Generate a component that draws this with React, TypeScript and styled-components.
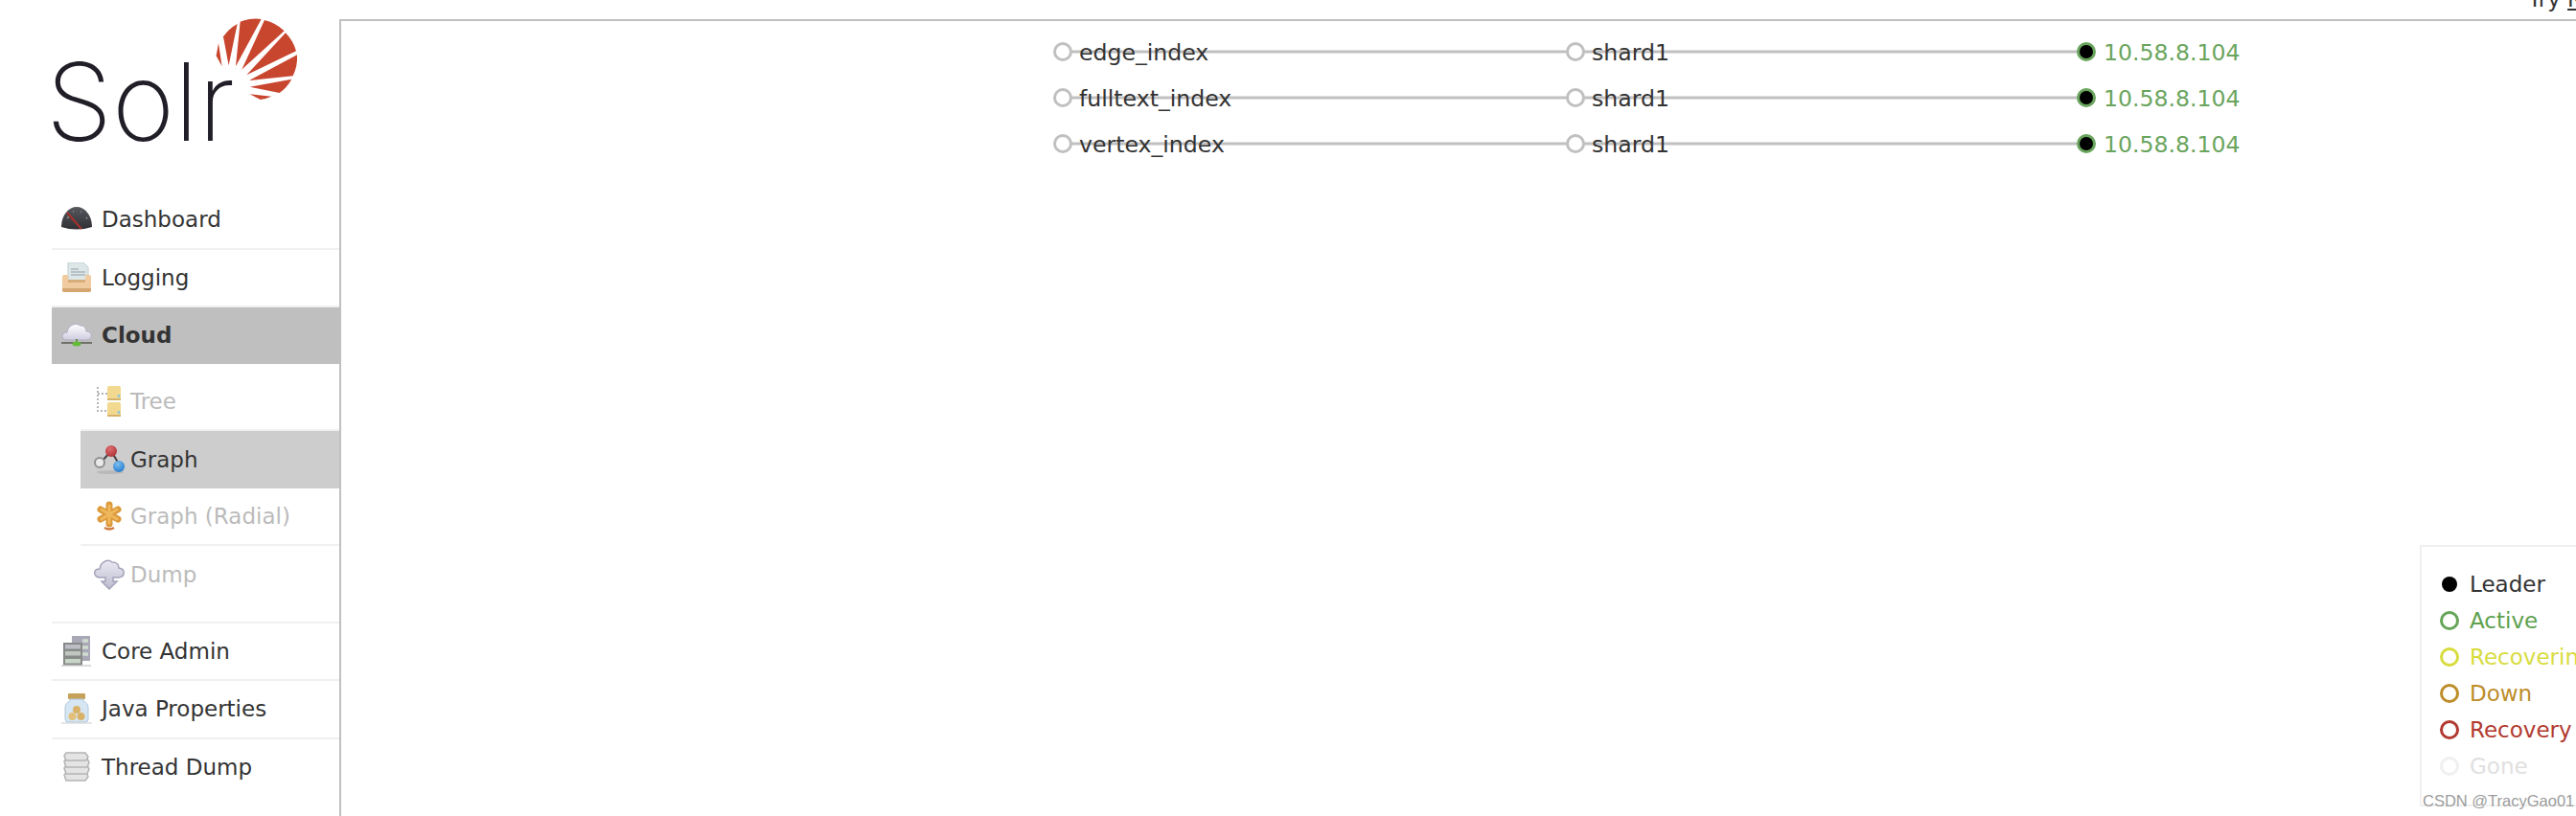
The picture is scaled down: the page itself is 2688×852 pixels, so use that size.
import React from "react";
import styled, { createGlobalStyle } from "styled-components";

const Global = createGlobalStyle`
  html, body { margin: 0; padding: 0; background: #fff; }
  body { font-family: "DejaVu Sans", "Liberation Sans", sans-serif; color: #333; }
`;

const Page = styled.div`
  display: grid;
  grid-template-columns: 354px 1fr;
  grid-template-rows: 20px 1fr;
  width: 100vw;
  height: 100vh;
  overflow: hidden;
  background: #fff;
`;
const TopBar = styled.div`
  grid-column: 1 / 3;
  height: 20px;
  overflow: hidden;
  padding-left: 2638px;
  font-size: 23px;
  line-height: 28px;
  white-space: nowrap;
  color: #333;
  & > div { margin-top: -15px; }
  & a { color: #333; text-decoration: underline; }
`;
const Sidebar = styled.aside`
  padding-left: 54px;
  display: flex;
  flex-direction: column;
`;
const LogoBox = styled.svg`
  display: block;
  width: 300px;
  height: 180px;
  overflow: visible;
`;
const NavList = styled.ul<{ $divided?: boolean }>`
  list-style: none;
  margin: 0;
  padding: 0;
  width: 301px;
  ${(p) => (p.$divided ? "border-top: 2px solid #f0f0f0;" : "")}
`;
const NavRow = styled.li<{ $active?: boolean; $line?: boolean }>`
  display: flex;
  align-items: center;
  box-sizing: border-box;
  height: ${(p) => (p.$line ? "60.5px" : "58.5px")};
  padding-left: 10px;
  font-size: 23px;
  color: #333;
  font-weight: ${(p) => (p.$active ? 700 : 400)};
  background: ${(p) => (p.$active ? "#bfbfbf" : "transparent")};
  border-bottom: ${(p) => (p.$line ? "2px solid #f0f0f0" : "0")};
`;
const IconSlot = styled.span`
  display: flex;
  align-items: center;
  justify-content: center;
  width: 32px;
  height: 32px;
  margin-right: 10px;
  flex: none;
  & > svg { filter: blur(0.45px); }
`;
const SubList = styled.ul`
  list-style: none;
  margin: 0 0 0 30px;
  padding: 10px 0 19px;
`;
const SubRow = styled.li<{ $active?: boolean; $line?: boolean }>`
  display: flex;
  align-items: center;
  box-sizing: border-box;
  height: 60px;
  padding-left: 14px;
  font-size: 23px;
  color: ${(p) => (p.$active ? "#333" : "#bbb")};
  background: ${(p) => (p.$active ? "#cdcdcd" : "transparent")};
  border-bottom: ${(p) => (p.$line ? "2px solid #f0f0f0" : "0")};
`;
const SubIcon = styled(IconSlot)`
  margin-right: 6px;
`;
const Main = styled.main`
  position: relative;
  border-left: 2px solid #c0c0c0;
  border-top: 2px solid #c0c0c0;
  min-width: 0;
`;
const GraphCanvas = styled.svg`
  display: block;
  width: 100%;
  height: 200px;
  font-family: "DejaVu Sans", sans-serif;
  font-size: 23.6px;
`;
const Legend = styled.ul`
  position: absolute;
  right: -100px;
  bottom: 10px;
  width: 263px;
  box-sizing: border-box;
  height: 273px;
  margin: 0;
  padding: 20px 0 0 19px;
  list-style: none;
  border: 2px solid #f0f0f0;
  background: #fff;
`;
const LegendRow = styled.li<{ $color: string }>`
  display: flex;
  align-items: center;
  height: 38px;
  font-size: 23px;
  white-space: nowrap;
  color: ${(p) => p.$color};
`;
const LegendDot = styled.span<{ $color: string; $filled?: boolean }>`
  box-sizing: border-box;
  flex: none;
  width: ${(p) => (p.$filled ? "16px" : "20px")};
  height: ${(p) => (p.$filled ? "16px" : "20px")};
  margin: ${(p) => (p.$filled ? "0 13px 0 2px" : "0 11px 0 0")};
  border-radius: 50%;
  border: ${(p) => (p.$filled ? "0" : `3px solid ${p.$color}`)};
  background: ${(p) => (p.$filled ? p.$color : "transparent")};
`;
const Watermark = styled.div`
  position: absolute;
  left: 1px;
  bottom: -6px;
  font-family: "Liberation Sans", Arial, sans-serif;
  font-size: 16.5px;
  line-height: 20px;
  color: #9c9c9c;
  white-space: nowrap;
`;

/* ---- logo ---- */
const rays = [
  "M684 135L695 208L677 175Z",
  "M699 115A130 130 0 0 1 743 75L716 205Z",
  "M752 68A130 130 0 0 1 818 60L738 208Z",
  "M828 63A130 130 0 0 1 890 97L757 218Z",
  "M894 103A130 130 0 0 1 927 160L772 235Z",
  "M930 172A130 130 0 0 1 917 238L780 252Z",
  "M913 248A130 130 0 0 1 875 291L782 272Z",
  "M850 302A130 130 0 0 1 815 312L782 295Z",
];
const Logo = () => (
  <LogoBox viewBox="54 20 300 180">
    <g transform="scale(0.3333)">
      {rays.map((d) => (
        <path key={d} d={d} fill="#c8452e" />
      ))}
    </g>
    <text
      x="48"
      y="147"
      fontFamily="Inter, Lato, sans-serif"
      fontWeight="250"
      fontSize="113"
      fill="#211e28"
      textLength="197"
      lengthAdjust="spacingAndGlyphs"
    >
      Solr
    </text>
  </LogoBox>
);

/* ---- icons ---- */
const I = ({ children }: { children: React.ReactNode }) => (
  <svg width="32" height="32" viewBox="0 0 32 32">
    {children}
  </svg>
);
const Dashboard = () => (
  <I>
    <defs>
      <linearGradient id="dash" x1="0" y1="0" x2="0" y2="1">
        <stop offset="0" stopColor="#56585e" />
        <stop offset="1" stopColor="#2f3034" />
      </linearGradient>
    </defs>
    <path d="M0 24C0 11 8 3 16 3S32 11 32 24Q16 29 0 24Z" fill="url(#dash)" />
    <path d="M6 15L8 13M12 8L13 7.5M20 8L21 8.5M26 14L27 15.5" stroke="#8a8c92" strokeWidth="1.4" />
    <path d="M6 9L21 26" stroke="#a5302b" strokeWidth="2" />
  </I>
);
const Logging = () => (
  <I>
    <path d="M7 0H23L28 5V20H7Z" fill="#dde7e8" stroke="#c2ced2" />
    <path d="M10 7H18M10 10H25M10 13H25" stroke="#a9b6bb" strokeWidth="1.5" />
    <path d="M1 15Q1 13 3 13H7V18H25V13H29Q31 13 31 15V29Q31 31 29 31H3Q1 31 1 29Z" fill="#efcb9f" />
    <path d="M7 18H25V21H7Z" fill="#d8ad7c" />
    <path d="M1 27H31V29Q31 31 29 31H3Q1 31 1 29Z" fill="#d6a671" />
  </I>
);
const Cloud = () => (
  <I>
    <defs>
      <linearGradient id="cl" x1="0" y1="0" x2="0" y2="1">
        <stop offset="0" stopColor="#fff" />
        <stop offset="1" stopColor="#cfcde0" />
      </linearGradient>
    </defs>
    <path
      d="M5 21C-1 20 0 13 6 13C7 6 14 2 20 6C24 6 26 9 26 12C33 12 33 20 27 21Z"
      fill="url(#cl)"
      stroke="#aeacc2"
    />
    <path d="M0 24H32" stroke="#6f7069" strokeWidth="2" />
    <path d="M16 20V25" stroke="#6c8f52" strokeWidth="2" />
    <ellipse cx="16" cy="25" rx="4.5" ry="2.5" fill="#62bb36" />
  </I>
);
const Tree = () => (
  <I>
    <path d="M4 1V26H14M4 8H14" stroke="#b5b5b5" strokeWidth="2" strokeDasharray="2 2" fill="none" />
    <rect x="14" y="0" width="14" height="15" rx="2" fill="#f2d98f" />
    <rect x="14" y="17" width="14" height="15" rx="2" fill="#f2d98f" />
    <path d="M14 13H28V15H14ZM14 30H28V32H14Z" fill="#d5b26b" />
    <path d="M26 9V12M26 26V29" stroke="#8fc5dc" strokeWidth="2.4" />
  </I>
);
const Graph = () => (
  <I>
    <defs>
      <radialGradient id="gr" cx=".4" cy=".3" r=".7">
        <stop offset="0" stopColor="#dd6f6f" />
        <stop offset="1" stopColor="#b1343a" />
      </radialGradient>
      <radialGradient id="gb" cx=".4" cy=".3" r=".7">
        <stop offset="0" stopColor="#7cc0f0" />
        <stop offset="1" stopColor="#2b7ed0" />
      </radialGradient>
    </defs>
    <ellipse cx="17" cy="29" rx="14" ry="2" fill="#b9b9b9" />
    <path d="M7 19L18 7L27 22" stroke="#444" strokeWidth="2" fill="none" />
    <circle cx="6" cy="19" r="5" fill="#e9e9e9" stroke="#8f8f8f" strokeWidth="2" />
    <circle cx="18" cy="7" r="6" fill="url(#gr)" />
    <circle cx="26" cy="23" r="6" fill="url(#gb)" />
  </I>
);
const Radial = () => (
  <I>
    <g stroke="#dc9a3b" strokeWidth="7" strokeLinecap="round">
      <path d="M16 4V24M7 9L25 19M25 9L7 19" />
    </g>
    <g stroke="#efb75c" strokeWidth="3" strokeLinecap="round">
      <path d="M16 5V23M8 9L24 19M24 9L8 19" />
    </g>
    <path d="M11 28Q16 31 21 28" stroke="#cf7a3f" strokeWidth="2.5" fill="none" />
  </I>
);
const Dump = () => (
  <I>
    <defs>
      <linearGradient id="du" x1="0" y1="0" x2="0" y2="1">
        <stop offset="0" stopColor="#e9e8f2" />
        <stop offset="1" stopColor="#bdbccf" />
      </linearGradient>
    </defs>
    <path
      d="M6 19C-1 18 -1 10 6 10C7 3 14 -1 19 3C24 3 26 6 26 9C33 10 33 18 26 19H20V23H24L16 31L8 23H12V19Z"
      fill="url(#du)"
      stroke="#a4a3ba"
      strokeWidth="1.5"
    />
  </I>
);
const CoreAdmin = () => (
  <I>
    <rect x="11" y="0" width="19" height="26" fill="#a9a8b6" />
    <path d="M22 5H28M22 12H28M22 19H28" stroke="#cfdcd0" strokeWidth="3.5" />
    <rect x="2" y="7" width="20" height="24" fill="#888a88" />
    <rect x="4" y="9" width="16" height="4.5" fill="#bdbdc6" />
    <rect x="4" y="16" width="16" height="4.5" fill="#c2c6c0" />
    <rect x="4" y="24" width="16" height="4.5" fill="#c8d6c8" />
    <path d="M0 31H31" stroke="#cfcfcf" strokeWidth="1.5" />
  </I>
);
const JavaProps = () => (
  <I>
    <rect x="7" y="0" width="18" height="6" rx="1" fill="#c6a25a" />
    <path d="M9 6H23V8Q28 10 28 15V27Q28 30 25 30H7Q4 30 4 27V15Q4 10 9 8Z" fill="#d6e6f2" stroke="#aec8dc" />
    <circle cx="16" cy="17" r="4" fill="#d9b268" />
    <circle cx="11.5" cy="24" r="4" fill="#e2c07a" />
    <circle cx="20.5" cy="24" r="4" fill="#d9b268" />
    <path d="M0 31H32" stroke="#d5d5d5" strokeWidth="1.2" />
  </I>
);
const Thread = () => (
  <I>
    <g fill="#e4e4e4" stroke="#b4b4b4" strokeWidth="1.5">
      <path d="M3 24L6 21H26L28 26L25 30H5Z" />
      <path d="M3 17L5 14H27L29 18L27 23H5Z" />
      <path d="M3 10L5 7H27L29 11L27 16H5Z" />
      <path d="M3 4L5 1H25L28 5L26 9H5Z" />
    </g>
  </I>
);

/* ---- graph data ---- */
const OX = 356;
const OY = 22;
const collections = [
  { name: "edge_index", y: 54 },
  { name: "fulltext_index", y: 102 },
  { name: "vertex_index", y: 150 },
];
const X = [1109, 1644, 2177].map((v) => v - OX);
const GREEN = "#6aa55e";

const legend = [
  { label: "Leader", color: "#333", dot: "#000", filled: true },
  { label: "Active", color: "#5ea14f", dot: "#65a558" },
  { label: "Recovering", color: "#d8dc3e", dot: "#d8dc3e" },
  { label: "Down", color: "#bd8d2a", dot: "#bd8d2a" },
  { label: "Recovery", color: "#b23a30", dot: "#b23a30" },
  { label: "Gone", color: "#e0e0e0", dot: "#f0f0f0" },
];

export default function App() {
  return (
    <Page>
      <Global />
      <TopBar>
        <div>
          Try <a>New UI</a>
        </div>
      </TopBar>
      <Sidebar>
        <Logo />
        <NavList>
          <NavRow $line>
            <IconSlot><Dashboard /></IconSlot>Dashboard
          </NavRow>
          <NavRow $line>
            <IconSlot><Logging /></IconSlot>Logging
          </NavRow>
          <NavRow $active>
            <IconSlot><Cloud /></IconSlot>Cloud
          </NavRow>
          <SubList>
            <SubRow $line>
              <SubIcon><Tree /></SubIcon>Tree
            </SubRow>
            <SubRow $active>
              <SubIcon><Graph /></SubIcon>Graph
            </SubRow>
            <SubRow $line>
              <SubIcon><Radial /></SubIcon>Graph (Radial)
            </SubRow>
            <SubRow>
              <SubIcon><Dump /></SubIcon>Dump
            </SubRow>
          </SubList>
        </NavList>
        <NavList $divided>
          <NavRow $line>
            <IconSlot><CoreAdmin /></IconSlot>Core Admin
          </NavRow>
          <NavRow $line>
            <IconSlot><JavaProps /></IconSlot>Java Properties
          </NavRow>
          <NavRow>
            <IconSlot><Thread /></IconSlot>Thread Dump
          </NavRow>
        </NavList>
      </Sidebar>
      <Main>
        <GraphCanvas>
          {collections.map(({ name, y }) => {
            const cy = y - OY;
            return (
              <g key={name}>
                <path d={`M${X[0]} ${cy}H${X[2]}`} stroke="#c0c0c0" strokeWidth="3" fill="none" />
                <circle cx={X[0]} cy={cy} r="8.5" fill="#fff" stroke="#c0c0c0" strokeWidth="3" />
                <circle cx={X[1]} cy={cy} r="8.5" fill="#fff" stroke="#c0c0c0" strokeWidth="3" />
                <circle cx={X[2]} cy={cy} r="8.5" fill="#000" stroke={GREEN} strokeWidth="3" />
                <text x={X[0] + 17} y={cy + 9} fill="#333">{name}</text>
                <text x={X[1] + 17} y={cy + 9} fill="#333">shard1</text>
                <text x={X[2] + 18} y={cy + 9} fill={GREEN}>10.58.8.104</text>
              </g>
            );
          })}
        </GraphCanvas>
        <Legend>
          {legend.map((l) => (
            <LegendRow key={l.label} $color={l.color}>
              <LegendDot $color={l.dot} $filled={l.filled} />
              {l.label}
            </LegendRow>
          ))}
          <Watermark>CSDN @TracyGao01</Watermark>
        </Legend>
      </Main>
    </Page>
  );
}
